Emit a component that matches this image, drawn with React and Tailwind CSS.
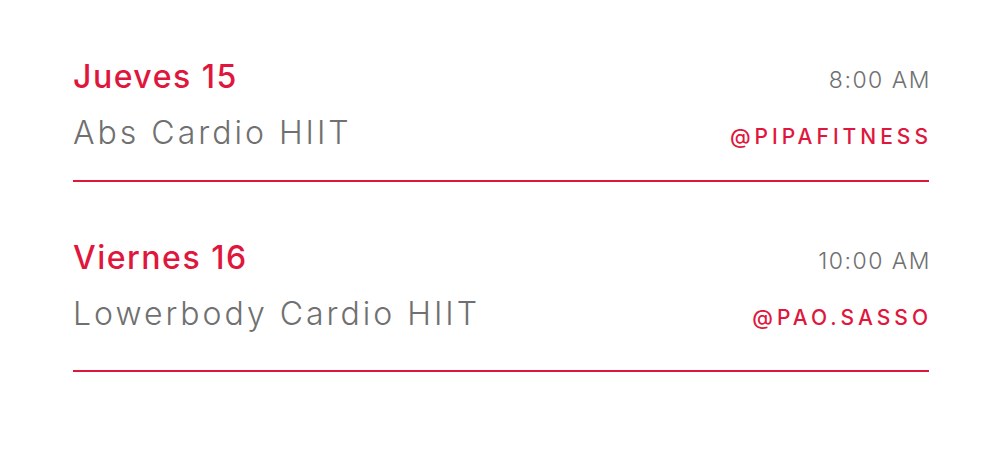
import React from "react";

const items = [
  { day: "Jueves 15", time: "8:00 AM", title: "Abs Cardio HIIT", handle: "@PIPAFITNESS", pb: "pb-[31px]" },
  { day: "Viernes 16", time: "10:00 AM", title: "Lowerbody Cardio HIIT", handle: "@PAO.SASSO", pb: "pb-[40px]" },
];

export default function App() {
  return (
    <div className="w-[1000px] h-[468px] bg-white px-[73px] pt-[61px]" style={{ fontFamily: "Inter, 'Noto Sans', sans-serif" }}>
      <div className="flex flex-col gap-[60px] w-[856px]">
        {items.map((it) => (
          <div key={it.day} className={`border-b-2 border-[#e0173d] ${it.pb}`}>
            <div className="flex justify-between items-baseline h-[40px]">
              <span className="text-[32px] font-medium text-[#e0173d] tracking-[1.5px] leading-none">{it.day}</span>
              <span className="text-[23px] font-light text-[#707070] tracking-[1.5px] mr-[-2px] leading-none">{it.time}</span>
            </div>
            <div className="flex justify-between items-baseline mt-[16px]">
              <span className="text-[32px] font-light text-[#707070] tracking-[3px] leading-none">{it.title}</span>
              <span className="text-[21px] font-medium text-[#e0173d] tracking-[4px] mr-[-3px] leading-none">{it.handle}</span>
            </div>
          </div>
        ))}
      </div>
    </div>
  );
}
